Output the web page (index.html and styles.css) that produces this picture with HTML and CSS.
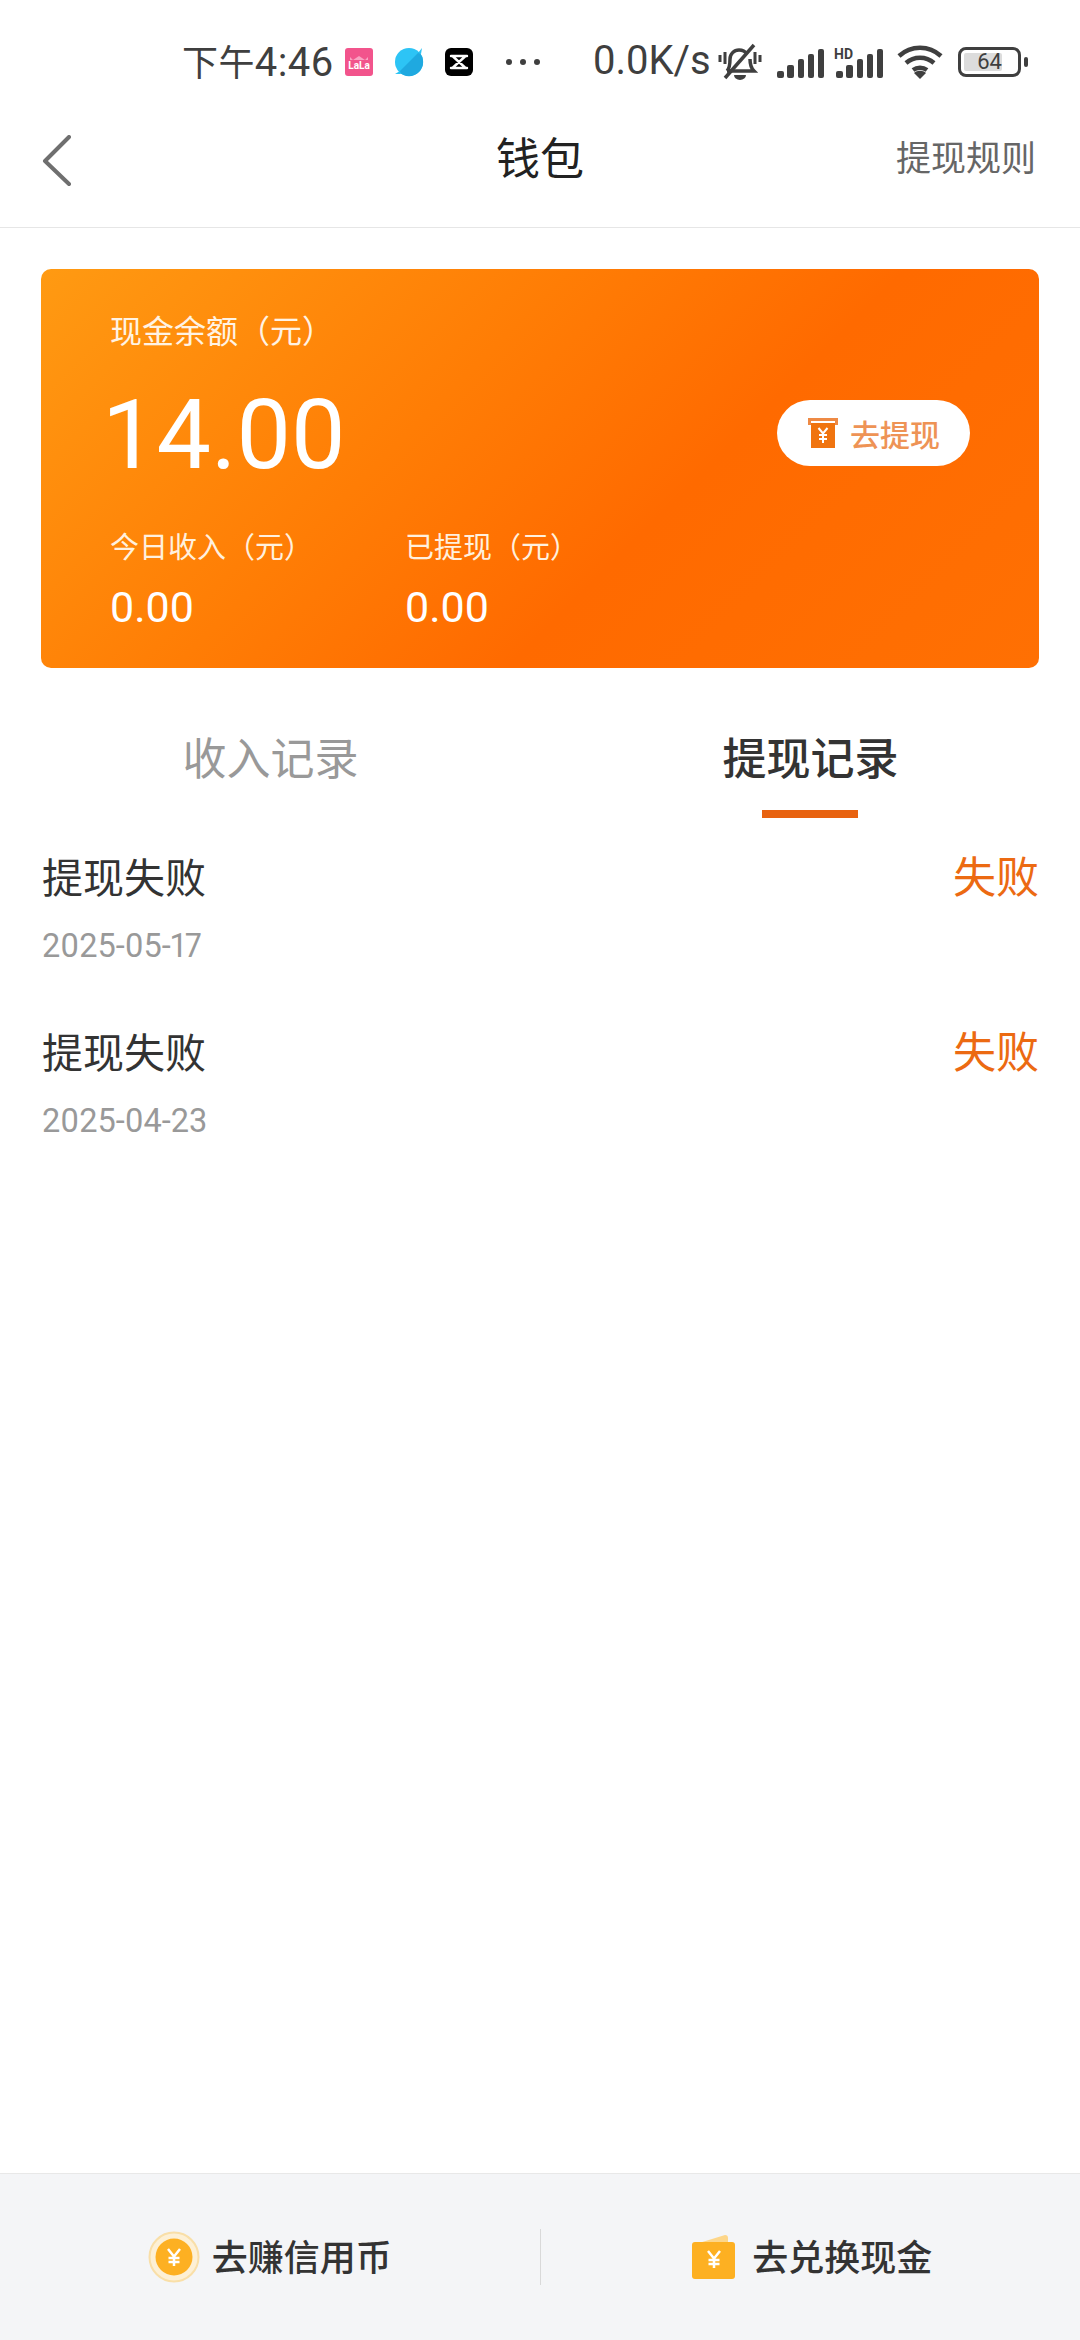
FILE: index.html
```html
<!DOCTYPE html>
<html lang="zh-CN">

<head>
    <meta charset="UTF-8" />
    <title>钱包</title>
    <link rel="stylesheet" href="styles.css">
</head>

<body>
    <div class="status-bar">
        <span class="status-time"><span class="time-cn">下午</span>4:46</span>
        <svg class="app-icon" viewBox="0 0 28 28">
            <rect width="28" height="28" rx="3" fill="#f2548c" />
            <path d="M5 9l3 3 6-4 6 4 3-3v3H5z" fill="#f9a3c2" />
            <text x="14" y="21" text-anchor="middle" font-family="Roboto" font-size="10" font-weight="700" fill="#fff">LaLa</text>
        </svg>
        <svg class="app-icon icon-second" viewBox="0 0 30 30">
            <circle cx="15" cy="15" r="14" fill="#2dc4f5" />
            <path d="M5 25L25 5A14 14 0 0 1 5 25Z" fill="#1fa9e0" />
            <path d="M24 6l4-5-1 6zM6 24l-5 3 6 0z" fill="#2dc4f5" />
        </svg>
        <svg class="app-icon icon-third" viewBox="0 0 28 28">
            <rect width="28" height="28" rx="6" fill="#000" />
            <path d="M6 8h16M6 20h16M8 8.500l12 11M8 19.500l12-11" fill="none" stroke="#fff" stroke-width="2.400" stroke-linecap="round" />
        </svg>
        <span class="status-dots"><i></i><i></i><i></i></span>
        <span class="status-speed">0.0K/s</span>
        <svg class="status-icon icon-bell" viewBox="0 0 44 38">
            <g fill="none" stroke="#3f3f3f" stroke-width="3.500">
                <path d="M9 28c3-3 3-8 3-12 0-5 4-9 9-9 3 0 6 1 8 4M32 16c0 5 1 9 4 12H9" />
                <path d="M7 35L36 2" />
                <path d="M2 12v7M7 9v12M37 9v12M42 12v7" stroke-width="3" />
            </g>
            <path d="M16 32h12a6 5 0 0 1-12 0z" fill="#3f3f3f" />
        </svg>
        <svg class="status-icon icon-signal" viewBox="0 0 48 30">
            <rect x="0" y="23" width="7" height="7" rx="2" />
            <rect x="10" y="17" width="7" height="13" rx="2" />
            <rect x="21" y="11" width="6" height="19" rx="2" />
            <rect x="31" y="6" width="6" height="24" rx="2" />
            <rect x="41" y="1" width="6" height="29" rx="2" />
        </svg>
        <span class="signal-hd">
            <span class="hd-label">HD</span>
            <svg class="status-icon icon-signal" viewBox="0 0 48 30">
                <rect x="0" y="23" width="7" height="7" rx="2" />
                <rect x="10" y="17" width="7" height="13" rx="2" />
                <rect x="21" y="11" width="6" height="19" rx="2" />
                <rect x="31" y="6" width="6" height="24" rx="2" />
                <rect x="41" y="1" width="6" height="29" rx="2" />
            </svg>
        </span>
        <svg class="status-icon icon-wifi" viewBox="0 0 46 34">
            <g fill="none" stroke="#3f3f3f" stroke-width="4.500">
                <path d="M2 11C14 0 32 0 44 11" />
                <path d="M9 18c8-7 20-7 28 0" />
                <path d="M16 25c4-3 10-3 14 0" />
            </g>
            <path d="M23 34l-6-6c3-3 9-3 12 0z" fill="#3f3f3f" />
        </svg>
        <span class="battery">
            <span class="battery-body">
                <span class="battery-fill"></span>
                <span class="battery-num">64</span>
            </span>
            <span class="battery-tip"></span>
        </span>
    </div>

    <div class="nav-bar">
        <svg class="nav-back" viewBox="0 0 30 52">
            <path d="M27 2L3 26l24 23" fill="none" stroke="#6f6f6f" stroke-width="4" stroke-linecap="round" stroke-linejoin="round" />
        </svg>
        <h1 class="nav-title">钱包</h1>
        <span class="nav-rule">提现规则</span>
    </div>

    <div class="balance-card">
        <div class="balance-label">现金余额（元）</div>
        <div class="balance-main">
            <span class="balance-num">14.00</span>
            <button class="withdraw-btn">
                <svg class="withdraw-icon" viewBox="0 0 32 32">
                    <path d="M1 1h30v7h-3V4H4v4H1z" fill="#ee8a45" />
                    <path d="M4 6h24v25H4z" fill="#f0740f" />
                    <path d="M11.500 11l4.500 5.500 4.500-5.500M16 16.500V26M12 18h8M12 22h8" fill="none" stroke="#fff" stroke-width="2" />
                </svg>
                去提现
            </button>
        </div>
        <div class="balance-stats">
            <div class="stat-item">
                <div class="stat-label">今日收入（元）</div>
                <div class="stat-num">0.00</div>
            </div>
            <div class="stat-item">
                <div class="stat-label">已提现（元）</div>
                <div class="stat-num">0.00</div>
            </div>
        </div>
    </div>

    <div class="tabs">
        <div class="tab-item">收入记录</div>
        <div class="tab-item active">提现记录</div>
    </div>

    <div class="record-list">
        <div class="record-item">
            <div>
                <div class="record-title">提现失败</div>
                <div class="record-date">2025-05-17</div>
            </div>
            <div class="record-status">失败</div>
        </div>
        <div class="record-item">
            <div>
                <div class="record-title">提现失败</div>
                <div class="record-date">2025-04-23</div>
            </div>
            <div class="record-status">失败</div>
        </div>
    </div>

    <div class="footer">
        <div class="footer-btn">
            <svg class="footer-icon" viewBox="0 0 52 52">
                <circle cx="26" cy="26" r="24.500" fill="#fdf0d5" stroke="#f9dfa8" stroke-width="2" />
                <circle cx="26" cy="26" r="18.500" fill="#fdb022" />
                <path d="M20 18l6 7.500 6-7.500M26 25.500V35M20.500 27h11M20.500 31h11" fill="none" stroke="#fff" stroke-width="2.500" />
            </svg>
            <span class="footer-text">去赚信用币</span>
        </div>
        <div class="footer-line"></div>
        <div class="footer-btn">
            <svg class="footer-wallet" viewBox="0 0 46 46">
                <path d="M8 9L34 1c2 0 3 1 3 3v6z" fill="#fdd689" />
                <rect x="1" y="8" width="43" height="37" rx="3" fill="#fdb022" />
                <path d="M17 17l6 7.500 6-7.500M23 24.500V34M17.500 26h11M17.500 30h11" fill="none" stroke="#fff" stroke-width="2.500" />
            </svg>
            <span class="footer-text">去兑换现金</span>
        </div>
    </div>
</body>

</html>
```

FILE: styles.css
```css
* {
    box-sizing: border-box;
}

html,
body {
    height: 100%;
}

body {
    margin: 0;
    display: flex;
    flex-direction: column;
    background: #fff;
    color: #333;
    font-family: Roboto, "Noto Sans CJK SC", sans-serif;
}

.status-bar {
    height: 105px;
    padding: 19px 0 0 182px;
    display: flex;
    align-items: center;
    color: #3f3f3f;
}

.status-time {
    width: 163px;
    margin-top: -5px;
    font-size: 40px;
    letter-spacing: 0.4px;
    white-space: nowrap;
}

.time-cn {
    font-size: 36px;
}

.app-icon {
    width: 28px;
    height: 28px;
}

.icon-second {
    margin-left: 21px;
    width: 30px;
    height: 30px;
}

.icon-third {
    margin-left: 21px;
}

.status-dots {
    margin-left: 33px;
    display: flex;
    gap: 8px;
}

.status-dots i {
    width: 6px;
    height: 6px;
    border-radius: 50%;
    background: #3f3f3f;
}

.status-speed {
    width: 125px;
    margin-left: 53px;
    margin-top: -3px;
    font-size: 40px;
}

.status-icon {
    fill: #3f3f3f;
}

.icon-bell {
    width: 44px;
    height: 38px;
}

.icon-signal {
    display: block;
    width: 48px;
    height: 30px;
}

.icon-bell + .icon-signal {
    margin-left: 15px;
    margin-top: 1px;
}

.signal-hd {
    position: relative;
    margin-left: 11px;
    margin-top: 1px;
}

.hd-label {
    position: absolute;
    left: -2px;
    top: 0;
    font-size: 14px;
    font-weight: 700;
    line-height: 12px;
}

.icon-wifi {
    width: 46px;
    height: 34px;
    margin-left: 13px;
}

.battery {
    margin-left: 15px;
    display: flex;
    align-items: center;
}

.battery-body {
    position: relative;
    width: 63px;
    height: 30px;
    border: 3px solid #3f3f3f;
    border-radius: 8px;
    display: flex;
    align-items: center;
    justify-content: center;
}

.battery-fill {
    position: absolute;
    left: 3px;
    top: 3px;
    bottom: 3px;
    width: 38px;
    background: #dcdcdc;
    border-radius: 2px;
}

.battery-num {
    position: relative;
    font-size: 22px;
    line-height: 22px;
}

.battery-tip {
    width: 4px;
    height: 10px;
    margin-left: 3px;
    background: #3f3f3f;
    border-radius: 2px;
}

.nav-bar {
    position: relative;
    height: 123px;
    padding: 0 44px 14px 42px;
    border-bottom: 1px solid #e6e6e6;
    display: flex;
    align-items: center;
    justify-content: space-between;
}

.nav-back {
    width: 30px;
    height: 52px;
    margin-top: 4px;
}

.nav-title {
    position: absolute;
    left: 0;
    right: 0;
    margin: 0 0 7px;
    text-align: center;
    font-size: 44px;
    font-weight: 400;
    color: #222;
    pointer-events: none;
}

.nav-rule {
    margin-bottom: 7px;
    font-size: 35px;
    color: #666;
}

.balance-card {
    margin: 41px 41px 0;
    height: 399px;
    padding: 41px 0 0 69px;
    border-radius: 10px;
    background: linear-gradient(135deg, #ff9a12 0%, #ff7d05 38%, #ff6a00 62%, #ff7003 100%);
    color: #fff;
}

.balance-label {
    font-size: 32px;
    line-height: 44px;
    color: #fff3e4;
}

.balance-main {
    margin-top: 25px;
    padding-right: 69px;
    display: flex;
    align-items: center;
    justify-content: space-between;
}

.balance-num {
    margin-left: -8px;
    font-size: 97px;
    line-height: 112px;
    font-weight: 400;
}

.withdraw-btn {
    width: 193px;
    height: 66px;
    margin-top: -4px;
    padding: 0;
    border: none;
    border-radius: 33px;
    background: #fff;
    color: #ee9355;
    font-family: inherit;
    font-size: 30px;
    font-weight: 500;
    display: flex;
    align-items: center;
    justify-content: center;
    gap: 11px;
}

.withdraw-icon {
    width: 32px;
    height: 32px;
}

.balance-stats {
    margin-top: 35px;
    display: flex;
}

.stat-item {
    width: 295px;
}

.stat-label {
    font-size: 29px;
    line-height: 44px;
    color: #fff0de;
}

.stat-num {
    margin-top: 13px;
    font-size: 43px;
    line-height: 48px;
}

.tabs {
    margin-top: 52px;
    height: 106px;
    display: flex;
}

.tab-item {
    position: relative;
    flex: 1;
    padding-left: 1px;
    text-align: center;
    font-size: 44px;
    line-height: 80px;
    color: #999;
}

.tab-item.active {
    color: #333;
    font-weight: 500;
}

.tab-item.active::after {
    content: "";
    position: absolute;
    left: 222px;
    bottom: 8px;
    width: 96px;
    height: 8px;
    background: #e8620f;
}

.record-list {
    flex: 1;
    padding: 0 41px 0 42px;
}

.record-item {
    height: 175px;
    display: flex;
    justify-content: space-between;
}

.record-title {
    margin-top: 24px;
    font-size: 41px;
    line-height: 58px;
    color: #333;
}

.record-date {
    margin-top: 18px;
    font-size: 32.500px;
    font-variant-numeric: proportional-nums;
    line-height: 40px;
    color: #999;
}

.record-status {
    margin-top: 22px;
    font-size: 43px;
    line-height: 60px;
    color: #ec6a12;
}

.footer {
    height: 167px;
    border-top: 1px solid #e8e8e8;
    background: #f4f5f7;
    display: flex;
    align-items: center;
}

.footer-btn {
    flex: 1;
    display: flex;
    align-items: center;
    justify-content: center;
    gap: 12px;
    font-size: 36px;
    font-weight: 500;
    color: #333;
}

.footer-text {
    margin-top: -4px;
}

.footer-icon {
    width: 52px;
    height: 52px;
}

.footer-wallet {
    width: 46px;
    height: 46px;
    margin: 0 3px;
}

.footer-line {
    width: 1px;
    height: 56px;
    background: #d9d9d9;
}
```
